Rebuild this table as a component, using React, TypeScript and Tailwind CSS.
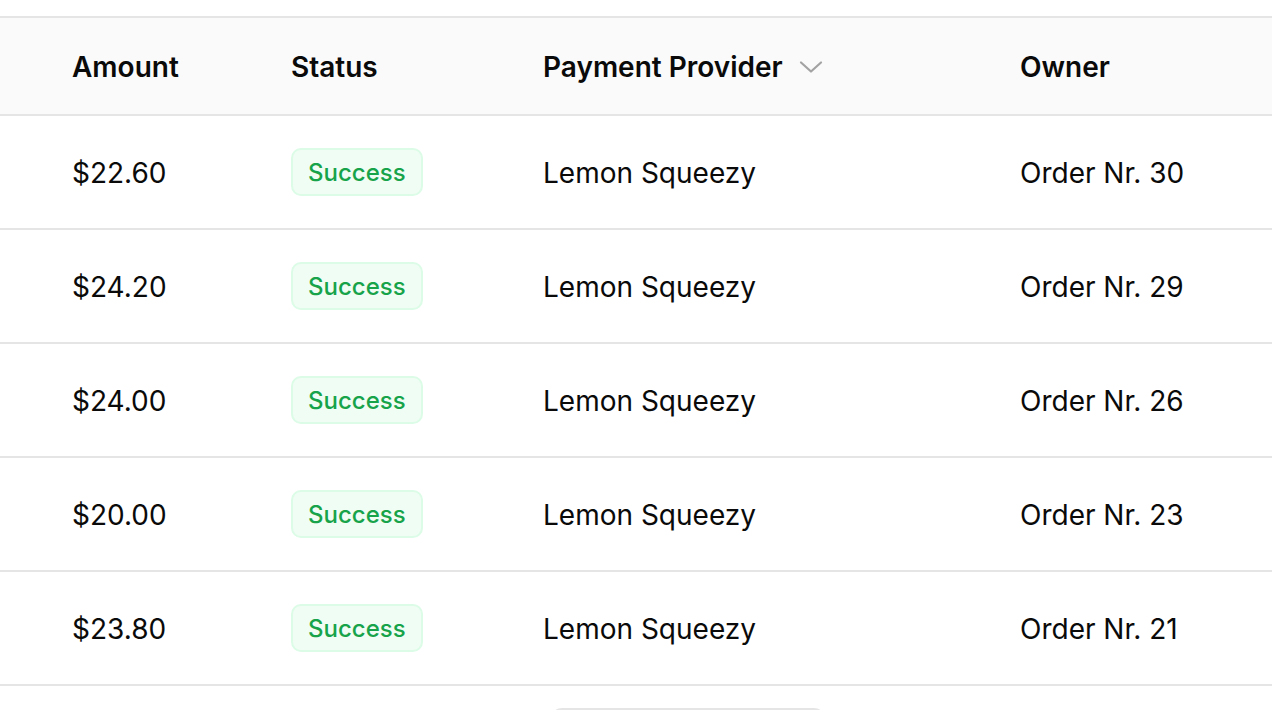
import React from 'react';

const rows = [
  { amount: '$22.60', order: 30 },
  { amount: '$24.20', order: 29 },
  { amount: '$24.00', order: 26 },
  { amount: '$20.00', order: 23 },
  { amount: '$23.80', order: 21 },
];

const cols = 'grid grid-cols-[291px_252px_477px_1fr] items-center';

const Chevron = () => (
  <svg width="24" height="14" viewBox="0 0 24 14" fill="none" className="text-[#a3a3a3]">
    <path d="M2 2.5L12 11.5L22 2.5" stroke="currentColor" strokeWidth="2.2" strokeLinecap="round" strokeLinejoin="round" />
  </svg>
);

const App = () => {
  return (
    <div className="w-[1272px] h-[710px] overflow-hidden bg-white text-[#0a0a0a] font-['Inter',sans-serif] pt-[16px]">
      <div className={`${cols} h-[100px] bg-[#fafafa] border-y-2 border-[#e5e5e5] text-[28px] font-semibold`}>
        <div className="pl-[72px] pt-[2px]">Amount</div>
        <div className="pt-[2px]">Status</div>
        <div className="flex items-center gap-[16px] pt-[2px]">
          Payment Provider
          <Chevron />
        </div>
        <div className="pt-[2px]">Owner</div>
      </div>

      {rows.map((r) => (
        <div key={r.order} className={`${cols} h-[114px] border-b-2 border-[#e5e5e5] text-[28px]`}>
          <div className="pl-[72px] pt-[2px]">{r.amount}</div>
          <div>
            <span className="inline-flex items-center h-[48px] px-[15px] pt-[1px] rounded-[10px] border-2 border-[#dcfce7] bg-[#f0fdf4] text-[#16a34a] text-[24px] font-medium">
              Success
            </span>
          </div>
          <div className="pt-[2px]">Lemon Squeezy</div>
          <div className="pt-[2px]">Order Nr. {r.order}</div>
        </div>
      ))}

      <div className="ml-[550px] mt-[22px] w-[276px] h-[60px] rounded-[12px] border-2 border-[#e5e5e5]" />
    </div>
  );
};

export default App;
